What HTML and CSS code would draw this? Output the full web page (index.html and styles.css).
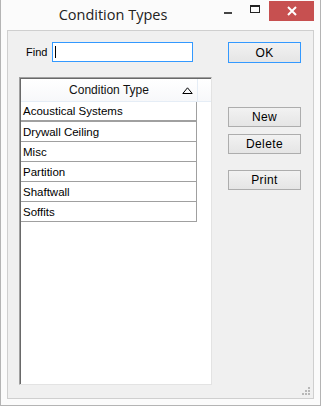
FILE: index.html
```html
<!DOCTYPE html>
<html lang="en">
<head>
    <meta charset="UTF-8">
    <title>Condition Types</title>
    <link rel="stylesheet" href="styles.css">
</head>
<body>

    <div class="window">
        <!-- Title bar -->
        <div class="titlebar">
            <div class="title">Condition Types</div>
            <div class="caption-btn min"><span class="min-bar"></span></div>
            <div class="caption-btn max"><span class="max-box"></span></div>
            <div class="caption-btn close">
                <svg width="10" height="10" viewBox="0 0 10 10"><path d="M1 1 L9 9 M9 1 L1 9" stroke="#fff" stroke-width="2"/></svg>
            </div>
        </div>

        <!-- Client area -->
        <div class="client">
            <div class="left">
                <div class="find-row">
                    <span class="find-label">Find</span>
                    <div class="find-box"><span class="caret"></span></div>
                </div>

                <div class="grid">
                    <div class="grid-head">
                        <div class="head-cell">
                            <span>Condition Type</span>
                            <svg class="sort" width="11" height="7" viewBox="0 0 11 7"><path d="M5.5 0.8 L10.2 6.5 L0.8 6.5 Z" fill="none" stroke="#000" stroke-width="1"/></svg>
                        </div>
                        <div class="head-rest"></div>
                    </div>
                    <div class="row current">Acoustical Systems</div>
                    <div class="row">Drywall Ceiling</div>
                    <div class="row">Misc</div>
                    <div class="row">Partition</div>
                    <div class="row">Shaftwall</div>
                    <div class="row">Soffits</div>
                </div>
            </div>

            <div class="right">
                <button class="btn default">OK</button>
                <button class="btn new">New</button>
                <button class="btn">Delete</button>
                <button class="btn print">Print</button>
            </div>

            <svg class="grip" width="9" height="9" viewBox="0 0 9 9" fill="#b8b8b8">
                <rect x="6" y="0" width="2" height="2"/>
                <rect x="3" y="3" width="2" height="2"/><rect x="6" y="3" width="2" height="2"/>
                <rect x="0" y="6" width="2" height="2"/><rect x="3" y="6" width="2" height="2"/><rect x="6" y="6" width="2" height="2"/>
            </svg>
        </div>
    </div>

</body>
</html>
```

FILE: styles.css
```css
/* Base */
body {
    margin: 0;
    padding: 0;
    font-family: "Liberation Sans", Arial, sans-serif;
    background: #fff;
}

/* Window frame */
.window {
    width: 321px;
    height: 406px;
    box-sizing: border-box;
    border: 1px solid #b4b4b4;
    border-top: none;
    background: #fbfbfb;
    display: flex;
    flex-direction: column;
}

/* Title bar */
.titlebar {
    height: 30px;
    display: flex;
    align-items: flex-start;
    padding-right: 6px;
}

.title {
    flex: 1;
    text-align: center;
    padding-left: 10px;
    padding-top: 5px;
    font-family: "Open Sans", "Noto Sans", sans-serif;
    font-size: 14.5px;
    color: #222;
}

.caption-btn {
    height: 20px;
    display: flex;
    align-items: center;
    justify-content: center;
}

.min { width: 26px; }
.max { width: 28px; }

.min-bar {
    width: 8px;
    height: 2px;
    background: #444;
    margin-top: 6px;
}

.max-box {
    width: 8px;
    height: 5px;
    border: 1px solid #222;
    border-top-width: 2px;
    margin-top: -2px;
}

.close {
    width: 45px;
    background: #c75050;
    margin-top: 1px;
}

/* Client area */
.client {
    flex: 1;
    margin: 0 6px 6px 6px;
    border: 1px solid #cfcfcf;
    background: #f0f0f0;
    padding: 11px 0 13px 11px;
    display: flex;
    gap: 16px;
    position: relative;
}

.left {
    width: 193px;
    display: flex;
    flex-direction: column;
    gap: 15px;
}

/* Find row */
.find-row {
    display: flex;
    align-items: center;
    height: 20px;
}

.find-label {
    width: 26px;
    padding-left: 7px;
    font-size: 11px;
    color: #000;
}

.find-box {
    width: 141px;
    height: 20px;
    box-sizing: border-box;
    border: 1px solid #3399ff;
    background: #fff;
    display: flex;
    align-items: center;
    padding-left: 2px;
}

.caret {
    width: 1px;
    height: 12px;
    background: #000;
}

/* Grid */
.grid {
    flex: 1;
    box-sizing: border-box;
    background: #fff;
    border: 1px solid;
    border-color: #a0a0a0 #e3e3e3 #e3e3e3 #a0a0a0;
    box-shadow: inset 1px 1px 0 #696969;
    padding: 1px 0 0 1px;
}

.grid-head {
    display: flex;
    height: 23px;
    background: linear-gradient(#ffffff, #f7f8fa);
    border-bottom: 1px solid #e5edf6;
    box-sizing: border-box;
}

.head-cell {
    width: 176px;
    border-right: 1px solid #e5edf6;
    position: relative;
    display: flex;
    align-items: center;
    justify-content: center;
    font-size: 12px;
    color: #111;
}

.sort {
    position: absolute;
    right: 4px;
    top: 8px;
}

.head-rest {
    flex: 1;
}

.row {
    width: 176px;
    height: 20px;
    box-sizing: border-box;
    border-right: 1px solid #a0a0a0;
    border-bottom: 1px solid #a0a0a0;
    padding: 1px 0 0 2px;
    font-size: 11.5px;
    line-height: 18px;
    color: #000;
}

.row.current {
    border-bottom-width: 2px;
    line-height: 17px;
}

/* Buttons */
.right {
    width: 73px;
    display: flex;
    flex-direction: column;
}

.btn {
    width: 73px;
    height: 20px;
    box-sizing: border-box;
    border: 1px solid #adadad;
    background: linear-gradient(#f2f2f2, #e5e5e5);
    font-family: "Liberation Sans", Arial, sans-serif;
    font-size: 12px;
    letter-spacing: 0.4px;
    color: #000;
    padding: 0;
    margin-bottom: 7px;
}

.btn.default {
    height: 21px;
    border-color: #3399ff;
    margin-bottom: 0;
}

.btn.new {
    margin-top: 44px;
}

.btn.print {
    margin-top: 9px;
}

/* Resize grip */
.grip {
    position: absolute;
    right: 2px;
    bottom: 2px;
}
```
